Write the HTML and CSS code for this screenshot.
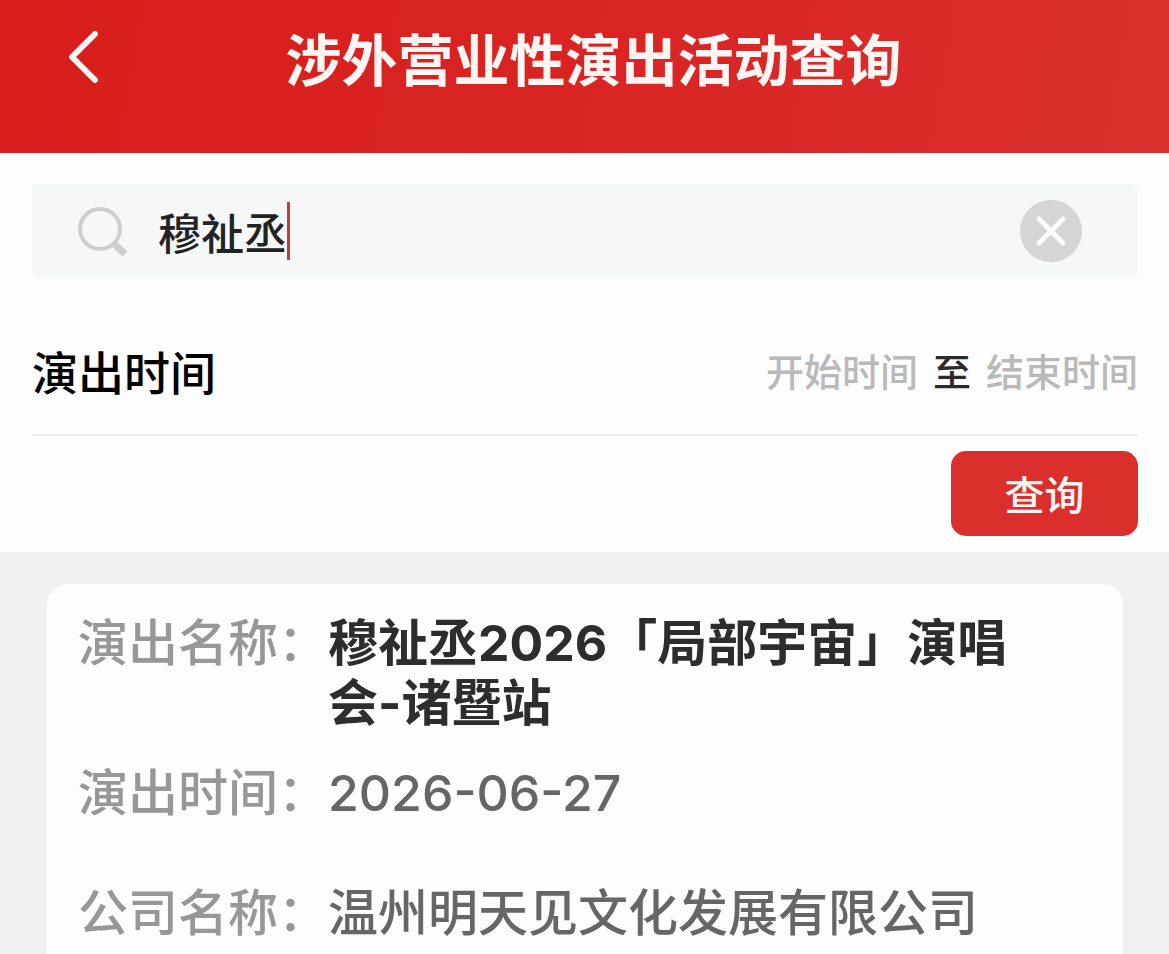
FILE: index.html
```html
<!DOCTYPE html>
<html lang="zh-CN">
<head>
    <meta charset="UTF-8">
    <meta name="viewport" content="width=device-width, initial-scale=1.0">
    <title>涉外营业性演出活动查询</title>
    <link rel="stylesheet" href="styles.css">
</head>
<body>
    <header class="header">
        <button type="button" class="back" aria-label="返回">
            <svg width="32" height="54" viewBox="0 0 32 54" fill="none" stroke="currentColor" stroke-width="6" stroke-linecap="round" stroke-linejoin="round">
                <path d="M28 4 L5 27 L28 50"/>
            </svg>
        </button>
        <h1>涉外营业性演出活动查询</h1>
    </header>

    <form class="search-form">
        <div class="search-box">
            <label for="keyword" aria-label="搜索">
                <svg class="search-icon" width="52" height="52" viewBox="0 0 52 52" fill="none" stroke="currentColor">
                    <circle cx="24" cy="24" r="20" stroke-width="4"/>
                    <path d="M37 38 L49 49" stroke-width="7"/>
                </svg>
            </label>
            <input type="text" id="keyword" class="keyword" value="穆祉丞">
            <span class="caret"></span>
            <button type="button" class="clear" aria-label="清除">
                <svg width="62" height="62" viewBox="0 0 62 62">
                    <circle cx="31" cy="31" r="31" fill="#d5d5d5"/>
                    <path d="M19 19 L43 43 M43 19 L19 43" stroke="#fbfbfb" stroke-width="5" stroke-linecap="round"/>
                </svg>
            </button>
        </div>

        <div class="date-row">
            <label for="startDate">演出时间</label>
            <div class="date-range">
                <input type="text" id="startDate" placeholder="开始时间" readonly>
                <span>至</span>
                <input type="text" id="endDate" placeholder="结束时间" aria-label="结束时间" readonly>
            </div>
        </div>

        <button type="submit" class="submit">查询</button>
    </form>

    <main class="results">
        <dl class="card">
            <div class="row">
                <dt>演出名称：</dt>
                <dd class="name">穆祉丞2026「局部宇宙」演唱会-诸暨站</dd>
            </div>
            <div class="row">
                <dt>演出时间：</dt>
                <dd>2026-06-27</dd>
            </div>
            <div class="row">
                <dt>公司名称：</dt>
                <dd>温州明天见文化发展有限公司</dd>
            </div>
        </dl>
    </main>
</body>
</html>
```

FILE: styles.css
```css
* {
    box-sizing: border-box;
}

body {
    margin: 0;
    height: 100vh;
    display: flex;
    flex-direction: column;
    background-color: #f0f0f0;
    font-family: "Noto Sans CJK SC", sans-serif;
    font-weight: 500;
    color: #2b2b2b;
}

button,
input {
    margin: 0;
    padding: 0;
    border: none;
    background: none;
    font: inherit;
    color: inherit;
}

button {
    cursor: pointer;
}

svg {
    display: block;
}

/* header */
.header {
    flex: none;
    display: grid;
    grid-template-columns: 120px 1fr 102px;
    align-items: start;
    padding-bottom: 39px;
    background: linear-gradient(100deg, #d71e1b, #d92423 50%, #da302e);
    color: #fff5f3;
}

.back {
    height: 114px;
    padding-left: 67px;
}

h1 {
    margin: 0;
    font-size: 56px;
    font-weight: 700;
    line-height: 114px;
    text-align: center;
}

/* search form */
.search-form {
    flex: none;
    display: flex;
    flex-direction: column;
    padding: 31px 31px 16px 32px;
    background-color: #fdfdfd;
}

.search-box {
    display: flex;
    align-items: center;
    height: 93px;
    padding: 0 56px 0 44px;
    border-radius: 6px;
    background-color: #f6f7f7;
}

.search-icon {
    color: #cdcecd;
}

.keyword {
    field-sizing: content;
    margin-left: 30px;
    font-size: 43px;
    line-height: 60px;
    color: #222423;
    outline: none;
}

.caret {
    width: 3px;
    height: 58px;
    background-color: #c43c40;
}

.clear {
    margin-left: auto;
}

.date-row {
    display: flex;
    justify-content: space-between;
    align-items: center;
    margin-top: 34px;
    height: 125px;
    padding-bottom: 5px;
    border-bottom: 2px solid #ededed;
    font-size: 46px;
    line-height: 60px;
    color: #000;
}

.date-range {
    display: flex;
    align-items: center;
    gap: 15px;
    font-size: 38px;
    color: #2b2b2b;
}

.date-range input {
    width: 152px;
    outline: none;
}

.date-range input::placeholder {
    color: #b9b9b9;
}

.submit {
    align-self: flex-end;
    margin-top: 15px;
    width: 187px;
    height: 85px;
    padding-bottom: 2px;
    border-radius: 15px;
    background-color: #da2f2d;
    font-size: 40px;
    color: #fff5f3;
}

/* results */
.results {
    flex: 1;
    min-height: 0;
    overflow-y: auto;
    scrollbar-width: none;
    padding: 32px 46px 32px 47px;
}

.card {
    display: flex;
    flex-direction: column;
    gap: 30px;
    margin: 0;
    padding: 29px 80px 29px 31px;
    border-radius: 20px;
    background-color: #fdfdfd;
    font-family: Inter, "Noto Sans CJK SC", sans-serif;
}

.row {
    display: flex;
    min-height: 90px;
    font-size: 50px;
    line-height: 60px;
}

dt {
    flex: none;
    color: #979797;
}

dd {
    margin: 0;
    color: #666;
}

.name {
    font-weight: 700;
    color: #2d2d2d;
}
```
